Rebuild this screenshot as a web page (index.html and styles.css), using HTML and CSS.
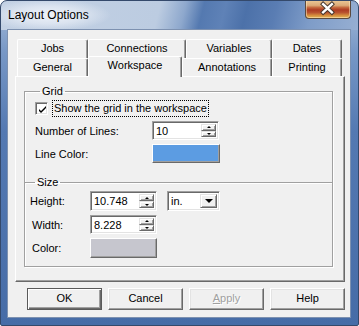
FILE: index.html
```html
<!DOCTYPE html>
<html>
<head>
<meta charset="utf-8">
<link rel="stylesheet" href="styles.css">
</head>
<body>
<div class="window">
  <div class="titlebar">
    <span class="title">Layout Options</span>
    <span class="close">
      <svg width="46" height="19" viewBox="0 0 46 19">
        <path d="M18.5 5 L27.5 13.5 M27.5 5 L18.5 13.5" stroke="#4a3a30" stroke-width="4.4" stroke-linecap="square" fill="none"/>
        <path d="M18.5 5 L27.5 13.5 M27.5 5 L18.5 13.5" stroke="#ffffff" stroke-width="2.4" stroke-linecap="square" fill="none"/>
      </svg>
    </span>
  </div>
  <div class="client">
    <div class="tabs">
      <div class="tabrow">
        <div class="tab t-jobs">Jobs</div>
        <div class="tab t-conn">Connections</div>
        <div class="tab t-vars">Variables</div>
        <div class="tab t-dates">Dates</div>
      </div>
      <div class="tabrow">
        <div class="tab t-gen">General</div>
        <div class="tab t-work selected">Workspace</div>
        <div class="tab t-ann">Annotations</div>
        <div class="tab t-print">Printing</div>
      </div>
    </div>
    <div class="panel">
      <fieldset class="group grid-group">
        <legend>Grid</legend>
        <div class="check-row">
          <span class="checkbox">
            <svg width="9" height="9" viewBox="0 0 9 9"><path d="M1 4 L3 6 L8 1 L8 3 L3 8 L1 6 Z" fill="#000"/></svg>
          </span>
          <span class="check-label">Show the grid in the workspace</span>
        </div>
        <div class="row grid-row">
          <span class="lbl lbl-grid">Number of Lines:</span>
          <div class="spin spin-lines">
            <span class="spin-val">10</span>
            <span class="spin-btns"><span class="sb"><i class="up"></i></span><span class="sb"><i class="down"></i></span></span>
          </div>
        </div>
        <div class="row grid-row color-row">
          <span class="lbl lbl-grid">Line Color:</span>
          <span class="colorbtn blue"></span>
        </div>
      </fieldset>
      <fieldset class="group size-group">
        <legend>Size</legend>
        <div class="row size-row r-height">
          <span class="lbl lbl-size">Height:</span>
          <div class="spin spin-size">
            <span class="spin-val">10.748</span>
            <span class="spin-btns"><span class="sb"><i class="up"></i></span><span class="sb"><i class="down"></i></span></span>
          </div>
          <div class="combo">
            <span class="combo-val">in.</span>
            <span class="combo-btn"><i class="down big"></i></span>
          </div>
        </div>
        <div class="row size-row r-width">
          <span class="lbl lbl-size indent">Width:</span>
          <div class="spin spin-size">
            <span class="spin-val">8.228</span>
            <span class="spin-btns"><span class="sb"><i class="up"></i></span><span class="sb"><i class="down"></i></span></span>
          </div>
        </div>
        <div class="row size-row r-color">
          <span class="lbl lbl-size indent">Color:</span>
          <span class="colorbtn gray"></span>
        </div>
      </fieldset>
    </div>
    <div class="buttons">
      <span class="btn default">OK</span>
      <span class="btn">Cancel</span>
      <span class="btn disabled"><u>A</u>pply</span>
      <span class="btn">Help</span>
    </div>
  </div>
</div>
</body>
</html>
```

FILE: styles.css
```css
* { box-sizing: border-box; }
html, body { margin: 0; padding: 0; }
body {
  width: 359px;
  height: 326px;
  overflow: hidden;
  font-family: "Liberation Sans", Arial, sans-serif;
  font-size: 11px;
  color: #000;
}
.window {
  width: 359px;
  height: 326px;
  border: 1px solid #34496b;
  border-radius: 7px 7px 2px 2px;
  background:
    radial-gradient(ellipse 62px 16px at 48px 14px, rgba(240,244,250,0.95) 0%, rgba(230,236,245,0.7) 55%, rgba(220,230,242,0) 100%) no-repeat,
    linear-gradient(104deg, #c3d1e4 0%, #bccce1 44%, #8ea8cd 51%, #5479b0 56%, #5f82b7 62%, #4c71a9 68%, #5a7db3 76%, #7e9cc8 86%, #97afd2 100%) 0 0 / 100% 29px no-repeat,
    linear-gradient(to bottom, #a7bcd9 0px, #7898c6 50px, #5479b2 130px, #466ca7 100%);
  display: flex;
  flex-direction: column;
  overflow: hidden;
}
.titlebar {
  height: 28px;
  display: flex;
  align-items: flex-start;
  padding: 0 7px 0 7px;
  flex: none;
}
.title {
  font-family: "Liberation Sans", Arial, sans-serif;
  font-size: 12px;
  line-height: 14px;
  margin-top: 7px;
  color: #000;
}
.close {
  margin-left: auto;
  width: 46px;
  height: 19px;
  margin-top: -1px;
  border: 1px solid #5b4a3e;
  border-top: none;
  border-radius: 0 0 4px 4px;
  background: linear-gradient(to bottom, #eccb98 0%, #dcaa78 30%, #c3683e 42%, #ad3b22 55%, #b9532f 70%, #d9973f 88%, #e2b15a 100%);
  box-shadow: inset 0 0 0 1px rgba(255,240,200,0.5);
  display: flex;
}
.close svg { display: block; margin: -1px 0 0 -1px; }

.client {
  margin: 0 7px 7px 6px;
  flex: 1;
  background: #f0f0f0;
  border: 1px solid #7d91b0;
  padding: 9px 5px 0 7px;
  display: flex;
  flex-direction: column;
}

/* tabs */
.tabs { margin-left: 2px; width: 325px; }
.tabrow { display: flex; }
.tabrow:first-child .tab { height: 19px; line-height: 17px; }
.tabrow:last-child .tab { height: 18px; line-height: 17px; }
.tab {
  text-align: center;
  background: #f0f0f0;
  border-top: 1px solid #fff;
  border-left: 1px solid #fff;
  border-right: 1px solid #696969;
  box-shadow: inset -1px 0 0 #a0a0a0;
  border-radius: 2px 2px 0 0;
}
.t-jobs { width: 71px; }
.t-conn { width: 98px; }
.t-vars { width: 86px; }
.t-dates { width: 70px; }
.t-gen { width: 71px; }
.t-work { width: 94px; }
.t-ann { width: 90px; }
.t-print { width: 70px; }
.tab.selected {
  position: relative;
  z-index: 1;
  height: 21px !important;
  margin-top: -2px;
  margin-bottom: -1px;
  line-height: 16px !important;
}

.panel {
  width: 330px;
  height: 206px;
  background: #f0f0f0;
  border-top: 1px solid #fff;
  border-left: 1px solid #fff;
  border-right: 1px solid #696969;
  border-bottom: 1px solid #696969;
  box-shadow: inset -1px -1px 0 #a0a0a0;
  padding: 8px 11px 0 8px;
}

.group {
  margin: 0;
  border: 1px solid #a0a0a0;
  box-shadow: inset 1px 1px 0 #fff, 1px 1px 0 #fff;
  min-width: 0;
}
.group legend {
  font-size: 11px;
  line-height: 13px;
  padding: 0 2px;
  margin-left: 5px;
}
.grid-group {
  border-bottom: none;
  padding: 0 0 19px 10px;
}
.size-group {
  margin-top: -6px;
  padding: 0 0 8px 5px;
  background: transparent;
  position: relative;
}

.check-row {
  margin-top: 2px;
  height: 17px;
  display: flex;
  align-items: center;
}
.checkbox {
  width: 13px;
  height: 13px;
  background: #fff;
  border-top: 1px solid #a0a0a0;
  border-left: 1px solid #a0a0a0;
  border-bottom: 1px solid #fff;
  border-right: 1px solid #fff;
  box-shadow: inset 1px 1px 0 #696969, inset -1px -1px 0 #e3e3e3;
  display: flex;
  align-items: center;
  justify-content: center;
  padding: 1px 0 0 1px;
}
.checkbox svg { display: block; }
.check-label {
  margin-left: 4px;
  border: 1px dotted #000;
  padding: 0 1px;
  line-height: 15px;
  height: 17px;
}

.row { display: flex; align-items: center; }
.grid-row { margin-top: 4px; }
.lbl-grid { width: 117px; }
.lbl-size { width: 60px; }
.lbl-size.indent { padding-left: 2px; }
.r-height { margin-top: 2px; }
.r-width { margin-top: 4px; }
.r-color { margin-top: 4px; }

.spin {
  display: flex;
  background: #fff;
  border-top: 1px solid #a0a0a0;
  border-left: 1px solid #a0a0a0;
  border-bottom: 1px solid #fff;
  border-right: 1px solid #fff;
  box-shadow: inset 1px 1px 0 #696969, inset -1px -1px 0 #e3e3e3;
  padding: 2px 2px 2px 2px;
}
.spin-lines { width: 67px; height: 19px; }
.spin-size { width: 67px; height: 20px; }
.r-width .spin-size { height: 19px; }
.spin-val {
  flex: 1;
  line-height: 14px;
  padding-left: 1px;
}
.spin-btns {
  width: 15px;
  display: flex;
  flex-direction: column;
}
.sb {
  flex: 1;
  background: #f0f0f0;
  border-top: 1px solid #e3e3e3;
  border-left: 1px solid #e3e3e3;
  border-right: 1px solid #696969;
  border-bottom: 1px solid #696969;
  box-shadow: inset 1px 1px 0 #fff, inset -1px -1px 0 #a0a0a0;
  display: flex;
  align-items: center;
  justify-content: center;
}
i.up, i.down {
  display: block;
  width: 0;
  height: 0;
  border-left: 2px solid transparent;
  border-right: 2px solid transparent;
}
i.up { border-bottom: 2px solid #000; }
i.down { border-top: 2px solid #000; }
i.down.big {
  border-left-width: 4px;
  border-right-width: 4px;
  border-top-width: 4px;
}

.combo {
  margin-left: 10px;
  width: 53px;
  height: 20px;
  display: flex;
  background: #fff;
  border-top: 1px solid #a0a0a0;
  border-left: 1px solid #a0a0a0;
  border-bottom: 1px solid #fff;
  border-right: 1px solid #fff;
  box-shadow: inset 1px 1px 0 #696969, inset -1px -1px 0 #e3e3e3;
  padding: 2px;
}
.combo-val { flex: 1; line-height: 14px; padding-left: 1px; }
.combo-btn {
  width: 17px;
  background: #f0f0f0;
  border-top: 1px solid #e3e3e3;
  border-left: 1px solid #e3e3e3;
  border-right: 1px solid #696969;
  border-bottom: 1px solid #696969;
  box-shadow: inset 1px 1px 0 #fff, inset -1px -1px 0 #a0a0a0;
  display: flex;
  align-items: center;
  justify-content: center;
}

.colorbtn {
  height: 19px;
  border-top: 1px solid #fff;
  border-left: 1px solid #fff;
  border-right: 1px solid #696969;
  border-bottom: 1px solid #696969;
  box-shadow: inset -1px -1px 0 #a0a0a0;
}
.colorbtn.blue { width: 68px; background: #5c9ce2; }
.colorbtn.gray { width: 67px; height: 20px; background: #c6c6ce; }

.buttons {
  display: flex;
  justify-content: flex-end;
  gap: 6px;
  margin-top: 6px;
  width: 330px;
}
.btn {
  width: 75px;
  height: 22px;
  text-align: center;
  line-height: 19px;
  background: #f0f0f0;
  border-top: 1px solid #fff;
  border-left: 1px solid #fff;
  border-right: 1px solid #696969;
  border-bottom: 1px solid #696969;
  box-shadow: inset -1px -1px 0 #a0a0a0, inset 1px 1px 0 #e3e3e3;
}
.btn.default {
  border: 1px solid #5a5a5a;
  box-shadow: inset 1px 1px 0 #fff, inset -1px -1px 0 #696969, inset -2px -2px 0 #a0a0a0;
}
.btn.disabled {
  color: #a0a0a0;
  text-shadow: 1px 1px 0 #fff;
}
.btn.disabled u { text-decoration: underline; }
```
